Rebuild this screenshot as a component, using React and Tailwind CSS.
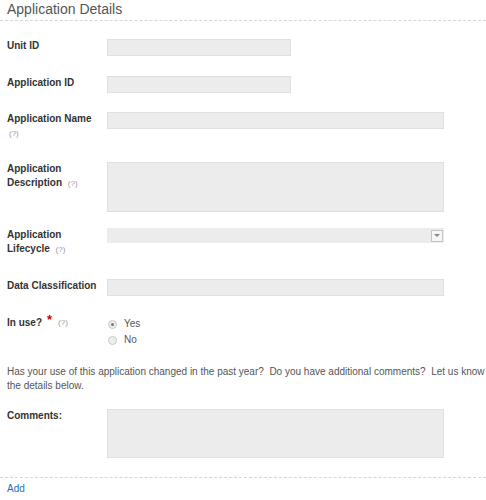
import React from 'react';

const font = { fontFamily: '"Liberation Sans", Arial, sans-serif' };

function Help({ className = '' }) {
    return <span className={ `text-[8px] leading-[8px] font-normal text-[#999] ${ className }` }>(?)</span>;
}

function Row({ label, children, className = '' }) {
    return (
        <div className={ `flex ${ className }` }>
            <div className="w-[107px] shrink-0 pl-[7px] pr-[7px] text-[10px] leading-[14px] font-bold text-[#333]">
                { label }
            </div>
            <div className="flex-1">{ children }</div>
        </div>
    );
}

function Field({ wide, className = 'h-[17px]' }) {
    return (
        <div className={ `${ wide ? 'w-[337px]' : 'w-[184px]' } ${ className } bg-[#ececec] border border-[#e0e0e0]` } />
    );
}

function Radio({ checked, label }) {
    return (
        <div className="flex items-center h-[16px] text-[10px] leading-[14px] text-[#555]">
            <span className="ml-[1px] w-[9px] h-[9px] rounded-full border border-[#c8c8c8] bg-[#eeeeee] flex items-center justify-center">
                { checked && <span className="w-[3px] h-[3px] rounded-full bg-[#777]" /> }
            </span>
            <span className="ml-[7px]">{ label }</span>
        </div>
    );
}

export default function App() {
    return (
        <div className="w-[486px] h-[500px] bg-white overflow-hidden" style={ font }>
            <div className="h-[21px] border-b border-dashed border-[#d6d6d6] pl-[7px] pt-[1px]">
                <h2 className="text-[14px] leading-[16px] text-[#555]">Application Details</h2>
            </div>

            <Row label="Unit ID" className="mt-[18px]">
                <Field />
            </Row>

            <Row label="Application ID" className="mt-[20px]">
                <Field />
            </Row>

            <Row label={ <>Application Name <Help className="ml-[2px]" /></> } className="mt-[19px]">
                <Field wide />
            </Row>

            <Row label={ <>Application Description <Help className="ml-[3px]" /></> } className="mt-[22px]">
                <Field wide className="h-[50px]" />
            </Row>

            <Row label={ <>Application Lifecycle <Help className="ml-[3px]" /></> } className="mt-[16px]">
                <div className="w-[337px] h-[15px] bg-[#ececec] flex justify-end items-center pr-[1px]">
                    <div className="w-[12px] h-[12px] border border-[#c4c4c4] bg-[#f6f6f6] flex items-center justify-center">
                        <span className="w-0 h-0 border-l-[3px] border-r-[3px] border-t-[3px] border-l-transparent border-r-transparent border-t-[#888]" />
                    </div>
                </div>
            </Row>

            <Row label="Data Classification" className="mt-[23px]">
                <Field wide />
            </Row>

            <Row
                label={
                    <span className="flex items-start h-[14px]">
                        In use?
                        <span className="ml-[5px] -mt-[3px] text-[13px] leading-[14px] text-[#c00]">*</span>
                        <span className="ml-[6px] mt-[3px] text-[8px] leading-[8px] font-normal text-[#999]">(?)</span>
                    </span>
                }
                className="mt-[20px]"
            >
                <Radio checked label="Yes" />
                <Radio label="No" />
            </Row>

            <p className="mt-[17px] pl-[7px] pr-[1px] text-[10px] leading-[14px] text-[#555]">
                Has your use of this application changed in the past year?{ '\u00a0 ' }Do you have additional comments?{ '\u00a0 ' }Let us know the details below.
            </p>

            <Row label="Comments:" className="mt-[16px]">
                <Field wide className="h-[49px]" />
            </Row>

            <div className="mt-[19px] border-t border-dashed border-[#d6d6d6] pl-[7px] pt-[4px] text-[10px] leading-[14px]">
                <a href="#" className="text-[#2a6ebb]">Add</a>
            </div>
        </div>
    );
}
